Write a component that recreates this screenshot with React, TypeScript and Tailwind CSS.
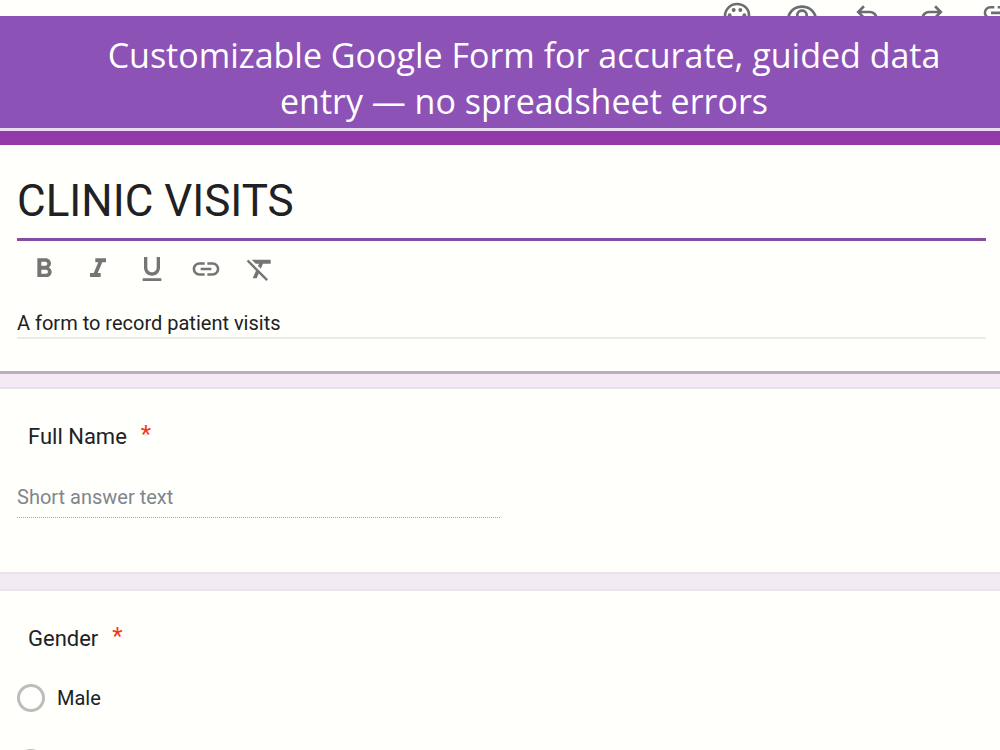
import React from 'react'
import {
  MdFormatBold, MdFormatClear, MdFormatItalic, MdFormatUnderlined,
  MdInsertLink, MdOutlinePalette, MdOutlineVisibility
} from 'react-icons/md'

const UndoIcon: React.FC = () => (
  <svg viewBox="0 -960 960 960" fill="currentColor" className="h-8 w-8">
    <path d="M280-200v-80h284q63 0 109.5-40T720-420q0-60-46.5-100T564-560H312l104 104-56 56-200-200 200-200 56 56-104 104h252q97 0 166.5 63T800-420q0 94-69.5 157T564-200H280Z" />
  </svg>
)

const RedoIcon: React.FC = () => (
  <svg viewBox="0 -960 960 960" fill="currentColor" className="h-8 w-8">
    <path d="M396-200q-97 0-166.5-63T160-420q0-94 69.5-157T396-640h252L544-744l56-56 200 200-200 200-56-56 104-104H396q-63 0-109.5 40T240-420q0 60 46.5 100T396-280h284v80H396Z" />
  </svg>
)

// Same link glyph, sitting a little higher than the other toolbar icons
const CopyLinkIcon: React.FC = () => (
  <svg viewBox="0 0 24 24" fill="currentColor" className="h-8 w-8">
    <path d="M7 4.500h3v1.900H7a3.100 3.100 0 0 0 0 6.200h3v1.900H7a5 5 0 0 1 0-10zM12.500 4.500H17a5 5 0 0 1 0 10h-4.500v-1.900H17a3.100 3.100 0 0 0 0-6.200h-4.500zM7.500 8.700h9v2h-9z" />
  </svg>
)

const toolbar = [
  { label: 'Customize theme', icon: <MdOutlinePalette className="h-8 w-8" /> },
  { label: 'Preview', icon: <MdOutlineVisibility className="h-8 w-8" /> },
  { label: 'Undo', icon: <UndoIcon /> },
  { label: 'Redo', icon: <RedoIcon /> },
  { label: 'Copy link', icon: <CopyLinkIcon /> }
]

const formatting = [
  { label: 'Bold', icon: <MdFormatBold className="h-8 w-8" /> },
  { label: 'Italic', icon: <MdFormatItalic className="h-8 w-8" /> },
  { label: 'Underline', icon: <MdFormatUnderlined className="h-8 w-8" /> },
  { label: 'Insert link', icon: <MdInsertLink className="h-8 w-8" /> },
  { label: 'Remove formatting', icon: <MdFormatClear className="h-8 w-8" /> }
]

const Required: React.FC = () => (
  <span className="ml-[14px] pb-1 text-[24px] text-[#ff3411]">*</span>
)

export default function App() {
  return (
    <div className="flex h-screen flex-col overflow-hidden bg-[#f3eaf3] font-[Roboto,sans-serif] text-[#202124]">
      <header className="h-4 shrink-0 overflow-hidden bg-[#fffffc]">
        <div className="-mr-[13px] flex justify-end gap-[33px] text-[#6a6e73]">
          {toolbar.map((item) => (
            <button key={item.label} aria-label={item.label} className="shrink-0">
              {item.icon}
            </button>
          ))}
        </div>
      </header>

      <div className="shrink-0 border-b-[3px] border-[#ecdcf1] bg-[#8c52b6] pt-4 pb-1 pl-12">
        <p className="mx-auto max-w-[860px] text-center font-['Open_Sans',sans-serif] text-[34px] leading-[46px] text-white">
          Customizable Google Form for accurate, guided data entry — no spreadsheet errors
        </p>
      </div>

      <section className="shrink-0 border-t-[14px] border-b-[3px] border-t-[#9238a9] border-b-[#b9b0bb] bg-[#fffffc] pt-7 pr-[14px] pb-8 pl-[17px]">
        <input
          aria-label="Form title"
          defaultValue="CLINIC VISITS"
          className="block h-[68px] w-full border-b-[3px] border-[#864da3] pb-[10px] text-[44px] outline-none"
        />
        <div className="mt-3 ml-[11px] flex gap-[22px] text-[#757575]">
          {formatting.map((item) => (
            <button key={item.label} aria-label={item.label}>
              {item.icon}
            </button>
          ))}
        </div>
        <input
          aria-label="Form description"
          defaultValue="A form to record patient visits"
          className="mt-6 block h-[30px] w-full border-b-2 border-[#ebebe9] text-[20px] outline-none"
        />
      </section>

      <section className="mt-[13px] shrink-0 border-y-2 border-[#e6e2ea] bg-[#fffffc] px-[17px] pt-[31px] pb-[54px]">
        <label htmlFor="full-name" className="ml-[11px] flex h-8 items-center text-[22px]">
          Full Name
          <Required />
        </label>
        <input
          id="full-name"
          placeholder="Short answer text"
          className="mt-7 block h-[38px] w-1/2 border-b border-dotted border-[#a8a8a8] pb-1 text-[20px] outline-none placeholder:text-[#80868b]"
        />
      </section>

      <section className="mt-[15px] shrink-0 border-t-2 border-[#e9e5ed] bg-[#fffffc] px-[17px] pt-[31px]">
        <fieldset>
          <legend className="ml-[11px] flex h-8 items-center text-[22px]">
            Gender
            <Required />
          </legend>
          <label className="mt-[30px] flex h-7 items-center gap-3 text-[20px]">
            <input
              type="radio"
              name="gender"
              className="h-7 w-7 appearance-none rounded-full border-[3px] border-[#bdbdbd]"
            />
            Male
          </label>
          <input
            type="radio"
            name="gender"
            aria-label="Option 2"
            className="mt-[37px] block h-7 w-7 appearance-none rounded-full border-[3px] border-[#bdbdbd]"
          />
        </fieldset>
      </section>
    </div>
  )
}
